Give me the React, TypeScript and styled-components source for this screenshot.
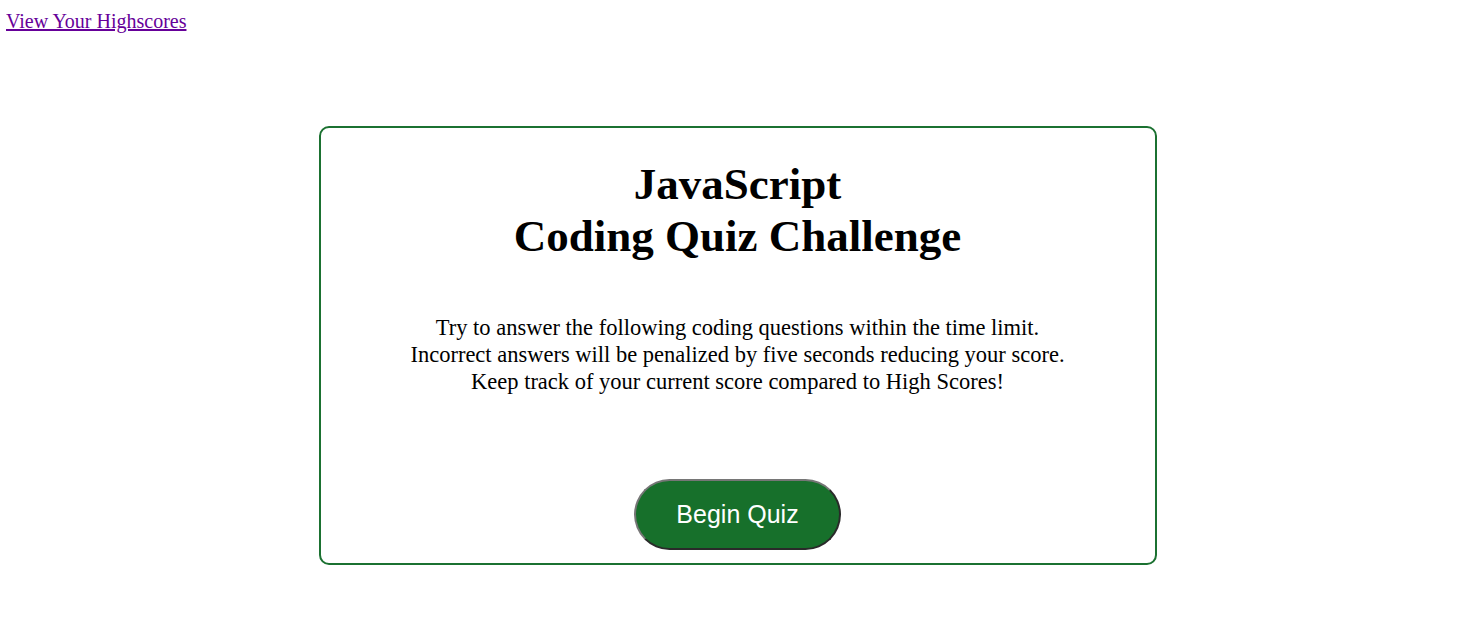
import React from "react";
import styled, { createGlobalStyle } from "styled-components";

const Global = createGlobalStyle`
  body {
    margin: 6px;
    font-family: "Liberation Serif", "Times New Roman", serif;
    background: #ffffff;
    color: #000000;
  }
`;

const Header = styled.header`
  display: flex;
  justify-content: flex-start;
  font-size: 20px;
  line-height: 30px;
`;

const ScoresLink = styled.a`
  color: #660099;
  text-decoration: underline;
`;

const Main = styled.main`
  display: flex;
  justify-content: center;
  padding: 90px 0 0 4px;
`;

const Card = styled.section`
  width: 834px;
  border: 2px solid #1b7131;
  border-radius: 10px;
  display: flex;
  flex-direction: column;
  align-items: center;
  text-align: center;
  padding: 30px 0 13px;
`;

const Title = styled.h1`
  margin: 0;
  font-size: 45px;
  line-height: 52px;
  font-weight: bold;
`;

const Intro = styled.p`
  margin: 52px 0 0;
  font-size: 22.5px;
  line-height: 27px;
`;

const BeginButton = styled.button`
  margin-top: 84px;
  width: 207px;
  height: 71px;
  border-radius: 36px;
  border: 2px solid #2a2a2a;
  border-top-color: #767676;
  border-left-color: #767676;
  background: #17702b;
  color: #ffffff;
  font-family: "Liberation Sans", Arial, sans-serif;
  font-size: 25px;
  cursor: pointer;
`;

export default function App() {
  return (
    <>
      <Global />
      <Header>
        <ScoresLink href="#">View Your Highscores</ScoresLink>
      </Header>
      <Main>
        <Card>
          <Title>
            JavaScript
            <br />
            Coding Quiz Challenge
          </Title>
          <Intro>
            Try to answer the following coding questions within the time limit.
            <br />
            Incorrect answers will be penalized by five seconds reducing your score.
            <br />
            Keep track of your current score compared to High Scores!
          </Intro>
          <BeginButton>Begin Quiz</BeginButton>
        </Card>
      </Main>
    </>
  );
}
